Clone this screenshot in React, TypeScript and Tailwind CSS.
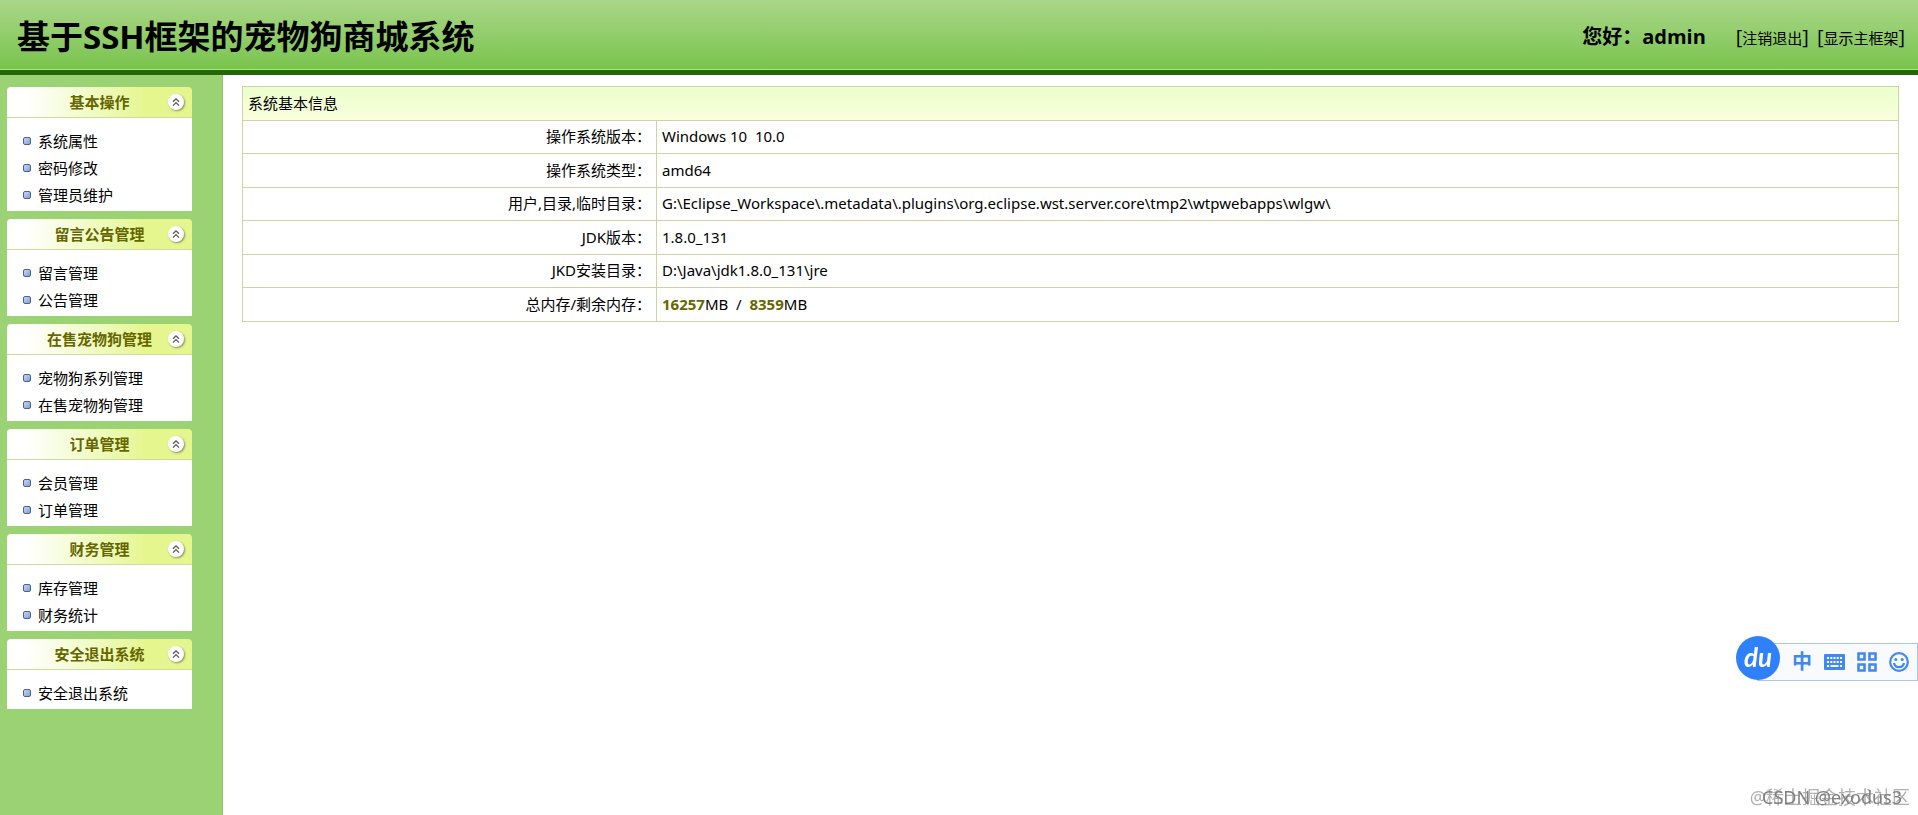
import { useState } from 'react'

interface MenuGroup {
  title: string
  items: string[]
}

const menu: MenuGroup[] = [
  { title: '基本操作', items: ['系统属性', '密码修改', '管理员维护'] },
  { title: '留言公告管理', items: ['留言管理', '公告管理'] },
  { title: '在售宠物狗管理', items: ['宠物狗系列管理', '在售宠物狗管理'] },
  { title: '订单管理', items: ['会员管理', '订单管理'] },
  { title: '财务管理', items: ['库存管理', '财务统计'] },
  { title: '安全退出系统', items: ['安全退出系统'] },
]

const info = [
  { label: '操作系统版本：', value: 'Windows 10\u00a0 10.0' },
  { label: '操作系统类型：', value: 'amd64' },
  {
    label: '用户,目录,临时目录：',
    value: 'G:\\Eclipse_Workspace\\.metadata\\.plugins\\org.eclipse.wst.server.core\\tmp2\\wtpwebapps\\wlgw\\',
  },
  { label: 'JDK版本：', value: '1.8.0_131' },
  { label: 'JKD安装目录：', value: 'D:\\Java\\jdk1.8.0_131\\jre' },
]

export default function App() {
  return (
    <div className="flex min-h-screen flex-col bg-white font-['Noto_Sans','Noto_Sans_CJK_SC',sans-serif] text-[15px] leading-5 text-black">
      <Header />
      <div className="flex flex-1">
        <aside className="w-[223px] shrink-0 border-r border-[#8fc56a] bg-[#9bd274] pt-3 pr-[30px] pl-[7px]">
          <nav className="flex flex-col gap-2">
            {menu.map((group) => (
              <MenuPanel key={group.title} group={group} />
            ))}
          </nav>
        </aside>
        <main className="min-w-0 flex-1 px-[19px] pt-[11px]">
          <SystemInfo />
        </main>
      </div>
      <InputBar />
      <Watermark />
    </div>
  )
}

function Header() {
  return (
    <header className="flex h-[75px] items-center justify-between border-b-[5px] border-[#22680a] bg-linear-to-b from-[#aad688] to-[#78c44b] pr-[13px] pl-[17px] font-['Open_Sans','Noto_Sans_CJK_SC',sans-serif] shadow-[inset_0_-1px_0_#a5e67f]">
      <h1 className="pt-1 text-[33px] leading-10 font-bold">基于SSH框架的宠物狗商城系统</h1>
      <div className="flex items-center pt-1 text-xl">
        <strong className="mr-[30px]">您好：admin</strong>
        <span className="mr-2">
          [<a href="#logout" className="text-[15px]">注销退出</a>]
        </span>
        <span>
          [<a href="#main" className="text-[15px]">显示主框架</a>]
        </span>
      </div>
    </header>
  )
}

function MenuPanel({ group }: { group: MenuGroup }) {
  const [open, setOpen] = useState(true)

  return (
    <section>
      <h2>
        <button
          type="button"
          aria-expanded={open}
          onClick={() => setOpen(!open)}
          className="relative h-[31px] w-full rounded-t border-b border-[#cfd9a0] bg-linear-to-r from-white from-10% to-[#e5f68e] to-75% font-bold text-[#666600]"
        >
          {group.title}
          <span className="absolute top-[7px] right-2 flex size-4 items-center justify-center rounded-full bg-white shadow-[1px_1px_2px_#8a8f5a]">
            <svg viewBox="0 0 16 16" className="size-4" fill="none" stroke="#555" strokeWidth="1.3">
              <path d="M5 7.8 8 4.8l3 3M5 11.6l3-3 3 3" />
            </svg>
          </span>
        </button>
      </h2>
      {open && (
        <ul className="bg-white pt-[9px] pb-[3px] pl-4">
          {group.items.map((item) => (
            <li key={item} className="flex h-[27px] items-center gap-[7px]">
              <span className="size-2 rounded-[2px] border border-[#55607c] bg-linear-to-br from-[#c3d8fa] to-[#7fa0dd]" />
              <a href="#menu">{item}</a>
            </li>
          ))}
        </ul>
      )}
    </section>
  )
}

function SystemInfo() {
  return (
    <table className="w-full table-fixed border-collapse border border-[#cfd2a4]">
      <colgroup>
        <col className="w-1/4" />
        <col />
      </colgroup>
      <thead>
        <tr className="h-[34px] border-b border-[#cfd2a4] bg-linear-to-b from-[#ebffcb] to-[#f9ffdc]">
          <th colSpan={2} className="px-[5px] pb-0.5 text-left font-normal">
            系统基本信息
          </th>
        </tr>
      </thead>
      <tbody>
        {info.map((row) => (
          <tr key={row.label} className="h-[33px] border-b border-[#cfd2a4] even:h-[34px]">
            <th scope="row" className="border-r border-[#cfd2a4] px-[5px] pb-0.5 text-right font-normal">
              {row.label}
            </th>
            <td className="px-[5px] pb-0.5">{row.value}</td>
          </tr>
        ))}
        <tr className="h-[34px]">
          <th scope="row" className="border-r border-[#cfd2a4] px-[5px] pb-0.5 text-right font-normal">
            总内存/剩余内存：
          </th>
          <td className="px-[5px] pb-0.5">
            <b className="text-[#666600]">16257</b>MB&nbsp; /&nbsp; <b className="text-[#666600]">8359</b>MB
          </td>
        </tr>
      </tbody>
    </table>
  )
}

// Floating input method bar docked to the right edge
function InputBar() {
  return (
    <div className="fixed right-0 bottom-[134px] flex h-[38px] w-[161px] items-center border border-[#a9c6f3] bg-[#f8fafd] pl-[34px] text-[#4089ee]">
      <span className="absolute -top-[8px] -left-[22px] flex size-11 items-center justify-center rounded-full bg-[#2f80fb] pb-0.5 font-['Lato',sans-serif] text-[26px] leading-none font-bold text-white italic">
        du
      </span>
      <div className="flex flex-1 items-center justify-between pr-2">
        <button type="button" className="text-xl leading-5 font-bold">中</button>
        <button type="button" aria-label="键盘">
          <svg viewBox="0 0 21 16" className="h-4 w-[21px]">
            <rect width="21" height="16" rx="1" fill="currentColor" />
            <g stroke="#fff" strokeWidth="2">
              <path d="M3 4h15" strokeDasharray="2 1.25" />
              <path d="M3 8h15" strokeDasharray="2 1.25" />
              <path d="M3 12h2M6.500 12h8M16 12h2" />
            </g>
          </svg>
        </button>
        <button type="button" aria-label="工具箱">
          <svg viewBox="0 0 20 20" className="size-5" fill="none" stroke="currentColor" strokeWidth="2.600">
            <path d="M1.500 1.500h6v6h-6zM12.500 1.500h6v6h-6zM1.500 12.500h6v6h-6zM12.500 12.500h6v6h-6z" />
          </svg>
        </button>
        <button type="button" aria-label="表情">
          <svg viewBox="0 0 20 20" className="size-5" fill="none" stroke="currentColor" strokeWidth="2.200">
            <circle cx="10" cy="10" r="8.800" />
            <path d="M5 11c1 5.500 9 5.500 10 0" />
            <circle cx="6.800" cy="7.500" r="1.500" fill="currentColor" stroke="none" />
            <circle cx="13.200" cy="7.500" r="1.500" fill="currentColor" stroke="none" />
          </svg>
        </button>
      </div>
    </div>
  )
}

function Watermark() {
  return (
    <div className="pointer-events-none fixed right-2 bottom-1 grid justify-items-end leading-6 whitespace-nowrap">
      <span className="col-start-1 row-start-1 text-lg text-[#b0b0b0]">@稀土掘金技术社区</span>
      <span className="col-start-1 row-start-1 mr-2 text-lg text-[#808080]">CSDN @exodus3</span>
    </div>
  )
}
